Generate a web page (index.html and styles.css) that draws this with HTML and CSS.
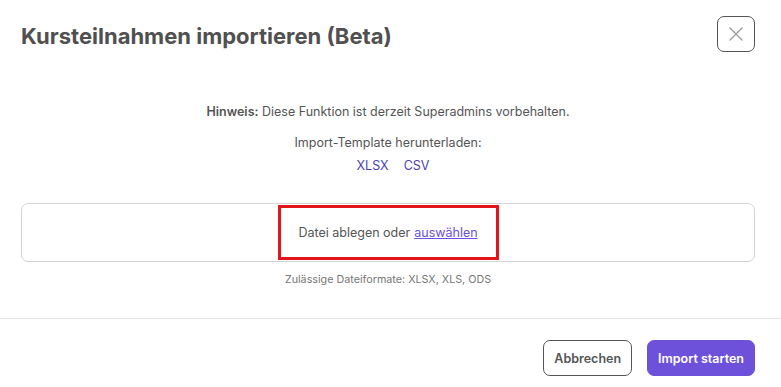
FILE: index.html
```html
<!DOCTYPE html>
<html lang="de">
<head>
  <meta charset="UTF-8" />
  <title>Kursteilnahmen importieren</title>
  <link rel="stylesheet" href="styles.css">
</head>
<body>

<div class="modal">
  <div class="modal-header">
    <h1>Kursteilnahmen importieren (Beta)</h1>
    <button class="close-btn" aria-label="Schließen">
      <svg width="16" height="16" viewBox="0 0 16 16">
        <path d="M1.5 1.5 L14.5 14.5 M14.5 1.5 L1.5 14.5" stroke="#999" stroke-width="1.2" fill="none"/>
      </svg>
    </button>
  </div>

  <div class="modal-body">
    <p class="hint"><strong>Hinweis:</strong> Diese Funktion ist derzeit Superadmins vorbehalten.</p>
    <p class="template">Import-Template herunterladen:</p>
    <div class="template-links">
      <a href="#">XLSX</a>
      <a href="#">CSV</a>
    </div>

    <div class="dropzone">
      <div class="drop-target">Datei ablegen oder <a href="#">auswählen</a></div>
    </div>
    <p class="formats">Zulässige Dateiformate: XLSX, XLS, ODS</p>
  </div>

  <div class="modal-footer">
    <button class="btn btn-cancel">Abbrechen</button>
    <button class="btn btn-primary">Import starten</button>
  </div>
</div>

</body>
</html>
```

FILE: styles.css
```css
body {
  margin: 0;
  background: #fff;
  font-family: Inter, "Noto Sans", sans-serif;
  color: #555;
}
.modal {
  width: 781px;
}
.modal-header {
  display: flex;
  justify-content: space-between;
  align-items: center;
  padding: 16px 26px 0 21px;
}
.modal-header h1 {
  margin: 4px 0 0;
  font-size: 22px;
  font-weight: 700;
  color: #505050;
}
.close-btn {
  width: 38px;
  height: 36px;
  border: 1px solid #555;
  border-radius: 7px;
  background: #fff;
  display: flex;
  align-items: center;
  justify-content: center;
  padding: 0;
}
.modal-body {
  padding: 51px 26px 0 21px;
  text-align: center;
  font-size: 12.5px;
}
.hint {
  margin: 0;
  line-height: 18px;
}
.hint strong {
  font-weight: 600;
}
.template {
  margin: 13px 0 0;
  line-height: 18px;
}
.template-links {
  margin-top: 5px;
  padding-left: 10px;
  line-height: 18px;
  display: flex;
  justify-content: center;
  gap: 15px;
}
.template-links a {
  color: #4a3fb4;
  text-decoration: none;
}
.dropzone {
  margin-top: 28px;
  height: 57px;
  border: 1px solid #d4d4d4;
  border-radius: 7px;
  display: flex;
  justify-content: center;
}
.drop-target {
  width: 215px;
  border: 3px solid #e4141b;
  margin-top: 1px;
  margin-bottom: 1px;
  display: flex;
  align-items: center;
  justify-content: center;
}
.drop-target a {
  color: #6a4fe0;
  margin-left: 4px;
}
.formats {
  margin: 10px 0 0;
  font-size: 10.75px;
  color: #777;
  line-height: 16px;
}
.modal-footer {
  margin-top: 30px;
  border-top: 1px solid #e6e6e6;
  display: flex;
  justify-content: flex-end;
  gap: 15px;
  padding: 21px 26px 0 0;
}
.btn {
  height: 36px;
  border-radius: 7px;
  font-family: Inter, sans-serif;
  font-size: 12.5px;
  font-weight: 600;
  padding: 0 10px;
  cursor: pointer;
}
.btn-cancel {
  background: #fff;
  border: 1px solid #555;
  color: #555;
}
.btn-primary {
  background: #6e51db;
  border: 1px solid #6e51db;
  color: #fff;
}
```
